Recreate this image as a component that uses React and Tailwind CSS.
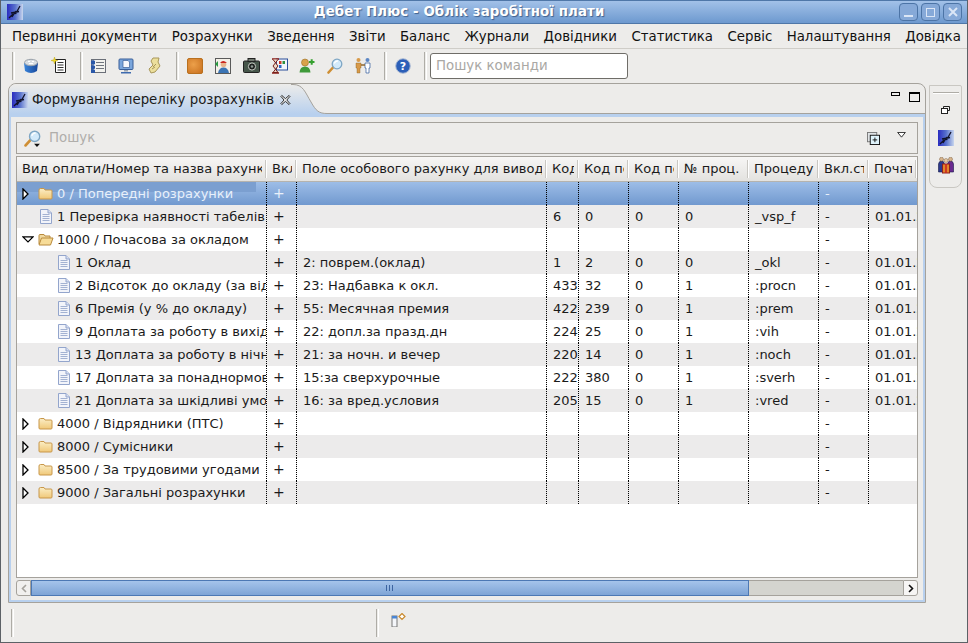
import React from 'react';

const cols = 'grid grid-cols-[250px_30px_250px_32px_50px_50px_70px_70px_50px_48px]';

const menu = ['Первинні документи', 'Розрахунки', 'Зведення', 'Звіти', 'Баланс', 'Журнали', 'Довідники', 'Статистика', 'Сервіс', 'Налаштування', 'Довідка'];
const headers = ['Вид оплати/Номер та назва рахунку', 'Вкл', 'Поле особового рахунку для виводу', 'Код', 'Код пол', 'Код пол', '№ проц.', 'Процедура', 'Вкл.ст', 'Початок'];

// kind: c = closed folder, o = open folder, d = document
const rows = [
  { kind: 'c', indent: 0, name: '0 / Попередні розрахунки', plus: '+', stav: '-', selected: true },
  { kind: 'd', indent: 1, name: '1 Перевірка наявності табелів', plus: '+', a: '6', b: '0', c: '0', n: '0', proc: '_vsp_f', stav: '-', date: '01.01.2009' },
  { kind: 'o', indent: 0, name: '1000 / Почасова за окладом', plus: '+', stav: '-' },
  { kind: 'd', indent: 2, name: '1 Оклад', plus: '+', field: '2: поврем.(оклад)', a: '1', b: '2', c: '0', n: '0', proc: '_okl', stav: '-', date: '01.01.2009' },
  { kind: 'd', indent: 2, name: '2 Відсоток до окладу (за відпрацьований час)', plus: '+', field: '23: Надбавка к окл.', a: '433', b: '32', c: '0', n: '1', proc: ':procn', stav: '-', date: '01.01.2009' },
  { kind: 'd', indent: 2, name: '6 Премія (у % до окладу)', plus: '+', field: '55: Месячная премия', a: '422', b: '239', c: '0', n: '1', proc: ':prem', stav: '-', date: '01.01.2009' },
  { kind: 'd', indent: 2, name: '9 Доплата за роботу в вихідні', plus: '+', field: '22: допл.за празд.дн', a: '224', b: '25', c: '0', n: '1', proc: ':vih', stav: '-', date: '01.01.2009' },
  { kind: 'd', indent: 2, name: '13 Доплата за роботу в нічний час', plus: '+', field: '21: за ночн. и вечер', a: '220', b: '14', c: '0', n: '1', proc: ':noch', stav: '-', date: '01.01.2009' },
  { kind: 'd', indent: 2, name: '17 Доплата за понаднормові', plus: '+', field: '15:за сверхурочные', a: '222', b: '380', c: '0', n: '1', proc: ':sverh', stav: '-', date: '01.01.2009' },
  { kind: 'd', indent: 2, name: '21 Доплата за шкідливі умови', plus: '+', field: '16: за вред.условия', a: '205', b: '15', c: '0', n: '1', proc: ':vred', stav: '-', date: '01.01.2009' },
  { kind: 'c', indent: 0, name: '4000 / Відрядники (ПТС)', plus: '+', stav: '-' },
  { kind: 'c', indent: 0, name: '8000 / Сумісники', plus: '+', stav: '-' },
  { kind: 'c', indent: 0, name: '8500 / За трудовими угодами', plus: '+', stav: '-' },
  { kind: 'c', indent: 0, name: '9000 / Загальні розрахунки', plus: '+', stav: '-' },
];

const AppIcon = ({ size = 16 }) => (
  <svg width={size} height={size} viewBox="0 0 16 16" className="shrink-0">
    <defs>
      <linearGradient id="appg" x1="0" x2="1" y1="0" y2="0">
        <stop offset="0" stopColor="#2a2cc0" />
        <stop offset="0.5" stopColor="#5670cc" />
        <stop offset="1" stopColor="#c8d6ee" />
      </linearGradient>
    </defs>
    <rect width="16" height="16" fill="url(#appg)" />
    <path d="M2 14 L6 10 L5 13 L9 7 L8.5 10 L13 2 M4 9 L12 7.5" stroke="#10122a" strokeWidth="1.3" fill="none" />
  </svg>
);

const FolderClosed = () => (
  <svg width="15" height="13" viewBox="0 0 15 13">
    <defs>
      <linearGradient id="fold" x1="0" x2="0" y1="0" y2="1">
        <stop offset="0" stopColor="#fbeec6" />
        <stop offset="1" stopColor="#f0c878" />
      </linearGradient>
    </defs>
    <path d="M1 3 V11 Q1 12 2 12 H13 Q14 12 14 11 V4 Q14 3 13 3 H7 L6 1.5 H2.5 Q1 1.5 1 3Z" fill="url(#fold)" stroke="#c8974a" />
  </svg>
);

const FolderOpen = () => (
  <svg width="16" height="13" viewBox="0 0 16 13">
    <path d="M1 11 V2.5 Q1 1.5 2 1.5 H6 L7 3 H12 V5" fill="#f0d9a0" stroke="#b98a3c" />
    <path d="M1 12 L3.5 5 H15 L12.5 12 Z" fill="#f7dc98" stroke="#b98a3c" strokeLinejoin="round" />
  </svg>
);

const DocIcon = () => (
  <svg width="12" height="15" viewBox="0 0 12 15">
    <path d="M0.5 0.5 H8 L11.5 4 V14.5 H0.5 Z" fill="#f2f4fa" stroke="#93a5cc" />
    <path d="M8 0.5 V4 H11.5" fill="#d6dff2" stroke="#93a5cc" />
    <path d="M2.5 5.5 H9.5 M2.5 7.5 H9.5 M2.5 9.5 H9.5 M2.5 11.5 H9.5" stroke="#a3b2d2" />
  </svg>
);

const ArrowRight = () => (
  <svg width="7" height="12" viewBox="0 0 7 12">
    <path d="M1 1 L6 6 L1 11 Z" fill="#fff" stroke="#000" strokeWidth="1.3" />
  </svg>
);

const ArrowDown = () => (
  <svg width="12" height="7" viewBox="0 0 12 7">
    <path d="M1 0.8 H11 L6 6 Z" fill="#fff" stroke="#000" strokeWidth="1.2" />
  </svg>
);

const Magnifier = ({ size = 16, dropdown }) => (
  <svg width={size} height={size} viewBox="0 0 16 16">
    <path d="M1.5 14.5 L6 9.5" stroke="#cf8f34" strokeWidth="2.6" strokeLinecap="round" />
    <circle cx="10" cy="6" r="4.8" fill="#d3eafa" stroke="#7ea6c4" strokeWidth="1.3" />
    <path d="M7.3 5.5 Q8 3 11 2.8" stroke="#fff" strokeWidth="1.2" fill="none" />
    {dropdown && <path d="M9.5 13 H15 L12.2 16 Z" fill="#111" />}
  </svg>
);

// toolbar drawings
const TbDatabase = () => (
  <svg width="16" height="16" viewBox="0 0 16 16">
    <defs>
      <linearGradient id="dbg" x1="0" x2="1" y1="0" y2="0">
        <stop offset="0" stopColor="#3b86dc" />
        <stop offset="1" stopColor="#17479a" />
      </linearGradient>
    </defs>
    <path d="M1 5 L2 13 Q8 17 14 13 L15 5 Z" fill="url(#dbg)" />
    <ellipse cx="8" cy="4.5" rx="6.5" ry="3.2" fill="#d8dde2" stroke="#9aa2aa" />
    <path d="M5 3.5 H7 M9 3.5 H11 M6 5.5 H10" stroke="#fff" />
  </svg>
);
const TbNote = () => (
  <svg width="16" height="17" viewBox="0 0 16 17">
    <path d="M4.5 2.5 H14.5 V15.5 H4.5 Z" fill="#fff" stroke="#222" />
    <path d="M6.5 5.5 H12.5 M6.5 8 H12.5 M6.5 10.5 H12.5 M6.5 13 H12.5" stroke="#333" />
    <path d="M3.5 0 L4.3 2.7 L7 3.5 L4.3 4.3 L3.5 7 L2.7 4.3 L0 3.5 L2.7 2.7Z" fill="#f2dc2a" stroke="#b59a10" strokeWidth="0.4" />
  </svg>
);
const TbList = () => (
  <svg width="16" height="15" viewBox="0 0 16 15">
    <rect x="1.5" y="1.5" width="14" height="13" fill="#f2f2ee" stroke="#6b6f78" />
    <path d="M6 4.5 H14 M6 7.5 H14 M6 10.5 H14" stroke="#70757e" />
    <path d="M1 3 L3 2 L5 3 V6 L3 7 L1 6 Z M1 7.5 L3 7 L5 8 V10.5 L3 11.5 L1 10.5 Z M1 11.5 L3 11 L5 12 V15 H1 Z" fill="#2b58a8" />
  </svg>
);
const TbMonitor = () => (
  <svg width="16" height="16" viewBox="0 0 16 16">
    <rect x="1" y="1" width="14" height="10.5" rx="1" fill="#7aa6dc" stroke="#3a5f98" />
    <path d="M5 2.5 H10 L11.5 4 V9.5 H5 Z" fill="#f6f8fc" stroke="#3a5f98" strokeWidth="0.7" />
    <path d="M6 12 H10 V13.5 H6Z" fill="#9aa5b2" />
    <path d="M3 14 H13 V15.5 H3Z" fill="#3e6bae" />
  </svg>
);
const TbScroll = () => (
  <svg width="14" height="17" viewBox="0 0 14 17">
    <path d="M6 1 H12 L11 5 L13 9 L8 15 L4 16 L2 12 L6 8 L4 4 Z" fill="#ecdf9c" stroke="#a8975a" />
    <path d="M6 10 L9 7 M5 12 L8 10" stroke="#a8975a" />
  </svg>
);
const TbOrange = () => (
  <svg width="16" height="16" viewBox="0 0 16 16">
    <defs>
      <radialGradient id="orng" cx="0.4" cy="0.4" r="0.8">
        <stop offset="0" stopColor="#eca04a" />
        <stop offset="1" stopColor="#c9701e" />
      </radialGradient>
    </defs>
    <rect x="0.5" y="0.5" width="15" height="15" rx="1.5" fill="url(#orng)" stroke="#b9701f" />
  </svg>
);
const TbPhoto = () => (
  <svg width="16" height="16" viewBox="0 0 16 16">
    <rect x="0.5" y="0.5" width="15" height="15" fill="#f4f0e8" stroke="#5a5a5a" />
    <circle cx="8.5" cy="6.5" r="2.8" fill="#e8b48c" />
    <path d="M5 5 Q8 1 12 5Z" fill="#c9261f" />
    <path d="M3 15 Q4 9.5 8.5 9.5 Q13 9.5 14 15Z" fill="#3b74b4" />
    <path d="M0 6 L3 3 V9Z" fill="#2a9a42" />
  </svg>
);
const TbCamera = () => (
  <svg width="17" height="15" viewBox="0 0 17 15">
    <rect x="0.5" y="3" width="16" height="11.5" rx="1" fill="#46564a" stroke="#222" />
    <rect x="5" y="0.5" width="7" height="3" fill="#70786f" stroke="#222" />
    <circle cx="9" cy="8.5" r="3.6" fill="#1d211e" stroke="#c7cbc5" />
    <circle cx="9" cy="8.5" r="1.3" fill="#8f9a93" />
  </svg>
);
const TbHourglass = () => (
  <svg width="17" height="16" viewBox="0 0 17 16">
    <rect x="5.5" y="1" width="11" height="11" fill="#f2f5fb" stroke="#2c4f9a" />
    <rect x="8" y="3" width="2.5" height="3" fill="#d23a2a" />
    <rect x="11.5" y="3" width="2.5" height="3" fill="#2f8f3f" />
    <rect x="8" y="7" width="2.5" height="3" fill="#2c66c0" />
    <path d="M1 1 H8 M1 15 H8" stroke="#8a1f1a" strokeWidth="1.6" />
    <path d="M2 1.5 L7 8 L2 14.5 H7 L2 8 L7 1.5" fill="#e8d8c8" stroke="#7a1f1a" />
  </svg>
);
const TbPersonAdd = () => (
  <svg width="16" height="15" viewBox="0 0 16 15">
    <circle cx="6" cy="4.5" r="3.5" fill="#d8a24a" stroke="#9a6f25" strokeWidth="0.6" />
    <path d="M0.5 14.5 Q1 8.5 6 8.5 Q11 8.5 11.5 14.5Z" fill="#3f9a3a" />
    <path d="M10 4 H15.5 M12.7 1.2 V6.8" stroke="#35a02f" strokeWidth="2" />
  </svg>
);
const TbPeople = () => (
  <svg width="16" height="17" viewBox="0 0 16 17">
    <circle cx="3.5" cy="3" r="2" fill="#d89a4a" />
    <path d="M1 6 H6 V11 H5 V16 H2 V11 H1Z" fill="#d89a4a" stroke="#8a5f20" strokeWidth="0.4" />
    <circle cx="12.5" cy="3" r="2" fill="#5b86c4" />
    <path d="M10 6 H15 V11 H14 V16 H11 V11 H10Z" fill="#fff" stroke="#2e5a9c" strokeWidth="0.7" />
    <path d="M6 8 H10" stroke="#8a5f20" strokeWidth="1.4" />
  </svg>
);
const TbHelp = () => (
  <svg width="16" height="16" viewBox="0 0 16 16">
    <circle cx="8" cy="8" r="7.3" fill="#2c5fb8" stroke="#aebcd4" />
    <text x="8" y="12" textAnchor="middle" fontSize="11" fontWeight="700" fill="#fff" fontFamily="'DejaVu Sans',sans-serif">?</text>
  </svg>
);
const GiftIcon = () => (
  <svg width="16" height="17" viewBox="0 0 16 17">
    <path d="M0.5 7 Q1 4 3.5 4 Q6 4 6.5 7 V15 H0.5Z" fill="#2c3a8c" stroke="#161a4a" strokeWidth="0.6" />
    <path d="M9.5 7 Q10 4 12.5 4 Q15 4 15.5 7 V15 H9.5Z" fill="#6a2a90" stroke="#161a4a" strokeWidth="0.6" />
    <rect x="4.5" y="7" width="7" height="9" fill="#e2852a" stroke="#8f1f1f" />
    <path d="M8 7 V16" stroke="#c9261f" strokeWidth="1.6" />
    <circle cx="3.5" cy="2.2" r="2" fill="#d6b48c" stroke="#6a4a2a" strokeWidth="0.4" />
    <circle cx="12.5" cy="2.2" r="2" fill="#d6b48c" stroke="#6a4a2a" strokeWidth="0.4" />
    <circle cx="8" cy="3.5" r="2" fill="#e3c8a4" stroke="#6a4a2a" strokeWidth="0.4" />
  </svg>
);

const ToolSep = ({ className = '' }) => (
  <div className={`h-[28px] w-[3px] shrink-0 border-l border-[#aeaca6] border-r border-r-white ${className}`} />
);

const ToolBtn = ({ children }) => (
  <div className="flex h-[28px] w-[28px] shrink-0 items-center justify-center">{children}</div>
);

const Cell = ({ children, className = '', last }) => (
  <div className={`flex min-w-0 items-center overflow-hidden whitespace-nowrap pl-[6px] ${last ? '' : 'border-r border-dotted border-black'} ${className}`}>
    {children}
  </div>
);

const TreeCell = ({ row }) => {
  const left = row.indent === 0 ? 'pl-[5px]' : row.indent === 1 ? 'pl-[21px]' : 'pl-[39px]';
  return (
    <div className={`relative flex min-w-0 items-center overflow-hidden whitespace-nowrap border-r border-dotted border-black ${left}`}>
      {row.selected && <div className="absolute left-0 top-0 h-[10px] w-[239px] bg-[#7b9fd0]" />}
      {row.indent === 0 && (
        <span className="relative flex w-[15px] shrink-0 items-center">
          {row.kind === 'o' ? <ArrowDown /> : <ArrowRight />}
        </span>
      )}
      {row.indent === 0 ? (
        <span className="relative flex w-[20px] shrink-0 items-center pl-[1px]">
          {row.kind === 'c' ? <FolderClosed /> : <FolderOpen />}
        </span>
      ) : (
        <span className="relative flex w-[19px] shrink-0 items-center pl-[2px]">
          <DocIcon />
        </span>
      )}
      <span className="relative">{row.name}</span>
    </div>
  );
};

const TableRow = ({ row, index }) => {
  const bg = row.selected
    ? 'bg-gradient-to-b from-[#9dbde7] to-[#7199cf] text-[#e8f0fa]'
    : index % 2 === 1
      ? 'bg-[#ecebeb]'
      : 'bg-white';
  return (
    <div className={`${cols} h-[23px] ${bg}`}>
      <TreeCell row={row} />
      <Cell className="text-[14px]">{row.plus}</Cell>
      <Cell>{row.field}</Cell>
      <Cell>{row.a}</Cell>
      <Cell>{row.b}</Cell>
      <Cell>{row.c}</Cell>
      <Cell>{row.n}</Cell>
      <Cell>{row.proc}</Cell>
      <Cell>{row.stav}</Cell>
      <Cell last>{row.date}</Cell>
    </div>
  );
};

export default function App() {
  return (
    <div className="flex h-[643px] w-[968px] flex-col overflow-hidden border-x border-b border-[#5c6166] bg-[#edecea] font-['DejaVu_Sans',sans-serif] text-[13.33px] text-[#1a1a1a]">
      {/* Title bar */}
      <div className="relative flex h-[24px] shrink-0 items-center justify-center border-y border-y-[#4f77a8] bg-gradient-to-b from-[#a2c1e8] to-[#6d99cf]">
        <div className="absolute left-[6px] top-[3px]">
          <AppIcon />
        </div>
        <span className="ml-[-50px] font-bold tracking-[0.12px] text-white [text-shadow:1px_1px_1px_#40608c]">Дебет Плюс - Облік заробітної плати</span>
        <div className="absolute right-[5px] top-[2px] flex gap-[3px]">
          <div className="flex h-[18px] w-[19px] items-end justify-center rounded-[4px] border border-[#4c74a6] bg-[#86a9d8] pb-[3px]">
            <div className="h-[2px] w-[9px] bg-[#dbe6f6]" />
          </div>
          <div className="flex h-[18px] w-[19px] items-center justify-center rounded-[4px] border border-[#4c74a6] bg-[#86a9d8]">
            <div className="h-[9px] w-[9px] border border-[#dbe6f6]" />
          </div>
          <div className="flex h-[18px] w-[19px] items-center justify-center rounded-[4px] border border-[#4c74a6] bg-[#86a9d8]">
            <svg width="10" height="10" viewBox="0 0 10 10"><path d="M1 1 L9 9 M9 1 L1 9" stroke="#dbe6f6" strokeWidth="2" /></svg>
          </div>
        </div>
      </div>

      {/* Menu bar */}
      <div className="flex h-[25px] shrink-0 items-center gap-[14.4px] border-b border-[#cfcdc8] pl-[11px] pt-[1px] whitespace-nowrap text-[#111]">
        {menu.map((m) => (
          <span key={m}>{m}</span>
        ))}
      </div>

      {/* Toolbar */}
      <div className="flex h-[34px] shrink-0 items-center pb-[1px] pl-[11px]">
        <ToolSep className="mr-[2px]" />
        <ToolBtn><TbDatabase /></ToolBtn>
        <ToolBtn><TbNote /></ToolBtn>
        <ToolSep className="ml-[7px] mr-[1px]" />
        <ToolBtn><TbList /></ToolBtn>
        <ToolBtn><TbMonitor /></ToolBtn>
        <ToolBtn><TbScroll /></ToolBtn>
        <ToolSep className="ml-[8px] mr-[2px]" />
        <ToolBtn><TbOrange /></ToolBtn>
        <ToolBtn><TbPhoto /></ToolBtn>
        <ToolBtn><TbCamera /></ToolBtn>
        <ToolBtn><TbHourglass /></ToolBtn>
        <ToolBtn><TbPersonAdd /></ToolBtn>
        <ToolBtn><Magnifier /></ToolBtn>
        <ToolBtn><TbPeople /></ToolBtn>
        <ToolSep className="ml-[7px] mr-[2px]" />
        <ToolBtn><TbHelp /></ToolBtn>
        <ToolSep className="ml-[7px] mr-[3px]" />
        <div className="flex h-[26px] w-[198px] items-center rounded-[3px] border border-[#6f6d68] bg-white pl-[5px] text-[#aaa8a4]">Пошук команди</div>
      </div>

      {/* Workbench */}
      <div className="flex min-h-0 flex-1 pl-[7px] pr-[5px]">
        <div className="flex h-[520px] w-[918px] flex-col rounded-t-[8px] border border-[#a5a29c] bg-[#edecea]">
          {/* Tab header */}
          <div className="flex h-[30px] shrink-0">
            <div className="flex w-[282px] items-center gap-[4px] rounded-tl-[8px] bg-gradient-to-b from-[#edecea] to-[#b8d0ee] pl-[3px] pt-[1px]">
              <AppIcon />
              <span className="whitespace-nowrap">Формування переліку розрахунків</span>
              <svg width="12" height="12" viewBox="0 0 12 12" className="ml-[2px]">
                <path d="M2 1 L6 4.5 L10 1 L11 2 L7.5 6 L11 10 L10 11 L6 7.5 L2 11 L1 10 L4.5 6 L1 2 Z" fill="#fff" stroke="#111" />
              </svg>
            </div>
            <svg width="36" height="30" viewBox="0 0 36 30" className="shrink-0">
              <defs>
                <linearGradient id="tabg" x1="0" x2="0" y1="0" y2="1">
                  <stop offset="0" stopColor="#edecea" />
                  <stop offset="1" stopColor="#b8d0ee" />
                </linearGradient>
              </defs>
              <path d="M0 0 H2 C12 0 14 8 20 18 C25 27 28 29.5 36 29.5 V30 H0 Z" fill="url(#tabg)" />
              <path d="M0 0.5 H2 C12 0.5 14 8 20 18 C25 27 28 29.5 36 29.5" fill="none" stroke="#a5a29c" />
            </svg>
            <div className="flex flex-1 justify-end gap-[9px] border-b border-[#a5a29c] pr-[5px] pt-[8px]">
              <div className="h-[4px] w-[9px] border border-black" />
              <div className="h-[10px] w-[11px] border border-black border-t-2" />
            </div>
          </div>

          {/* Blue frame */}
          <div className="h-[3px] shrink-0 bg-[#b8d0ee]" />
          <div className="flex min-h-0 flex-1 flex-col border-x-2 border-b-2 border-[#b8d0ee] px-[5px] pt-[5px]">
            {/* Search bar */}
            <div className="flex h-[32px] shrink-0 items-center border border-[#a5a29c] pl-[7px] pr-[11px]">
              <Magnifier size={17} dropdown />
              <span className="ml-[8px] text-[#b0aeaa]">Пошук</span>
              <div className="ml-auto mt-[9px] flex items-start gap-[17px] self-start">
                <svg width="13" height="13" viewBox="0 0 14 14">
                  <rect x="0.5" y="0.5" width="10" height="10" fill="#dfe3e6" stroke="#777" />
                  <rect x="3.5" y="3.5" width="10" height="10" fill="#dff3fb" stroke="#111" />
                  <path d="M6 8.5 H11 M8.5 6 V11" stroke="#111" />
                </svg>
                <svg width="9" height="6" viewBox="0 0 10 7">
                  <path d="M0.5 0.5 H9.5 L5 6 Z" fill="#fff" stroke="#111" />
                </svg>
              </div>
            </div>

            {/* Table */}
            <div className="mt-[2px] flex h-[422px] shrink-0 flex-col overflow-hidden border border-[#a5a29c] bg-white text-[13px]">
              <div className={`${cols} h-[25px] shrink-0 border-b border-[#b5b3ae] bg-gradient-to-b from-[#f7f6f5] to-[#e3e2df]`}>
                {headers.map((h, i) => (
                  <div key={i} className="flex min-w-0 items-center pl-[5px]">
                    <span className="min-w-0 flex-1 overflow-hidden whitespace-nowrap">{h}</span>
                    <div className="ml-[3px] h-[18px] w-[2px] shrink-0 border-l border-[#c9c7c2] border-r border-r-white" />
                  </div>
                ))}
              </div>
              {rows.map((r, i) => (
                <TableRow key={r.name} row={r} index={i} />
              ))}
            </div>

            {/* Horizontal scrollbar */}
            <div className="mt-[2px] flex h-[16px] shrink-0">
              <div className="flex w-[15px] items-center justify-center rounded-l-[3px] border border-[#a5a29c] bg-[#f1f0ee]">
                <svg width="6" height="9" viewBox="0 0 6 9"><path d="M5 1 L1.5 4.5 L5 8" fill="none" stroke="#a5a29c" strokeWidth="1.6" /></svg>
              </div>
              <div className="flex w-[718px] items-center justify-center border border-[#4c78b4] bg-gradient-to-b from-[#a5c4eb] to-[#7ea4d6]">
                <svg width="8" height="6" viewBox="0 0 8 6"><path d="M0.5 0 V6 M3.5 0 V6 M6.5 0 V6" stroke="#3c64a0" /></svg>
              </div>
              <div className="flex-1 border-y border-[#a5a29c] bg-[#d4d4cf]" />
              <div className="flex w-[15px] items-center justify-center rounded-r-[3px] border border-[#a5a29c] bg-[#f6f5f4]">
                <svg width="6" height="9" viewBox="0 0 6 9"><path d="M1 1 L4.5 4.5 L1 8" fill="none" stroke="#111" strokeWidth="1.6" /></svg>
              </div>
            </div>
          </div>
        </div>

        {/* Right trim */}
        <div className="ml-[3px] mt-[2px] flex h-[103px] w-[33px] shrink-0 flex-col items-center rounded-b-[8px] rounded-tr-[2px] border border-[#c9c7c2]">
          <div className="mt-[6px] h-[2px] w-[26px] border-t border-[#aeaca6] border-b border-b-white" />
          <svg width="9" height="8" viewBox="0 0 9 8" className="mt-[12px]">
            <path d="M2.5 2.5 V0.5 H8.5 V4.5 H6.5" fill="none" stroke="#222" />
            <rect x="0.5" y="2.5" width="6" height="5" fill="#fff" stroke="#222" />
          </svg>
          <div className="mt-[16px]"><AppIcon /></div>
          <div className="mt-[11px]"><GiftIcon /></div>
        </div>
      </div>

      {/* Status bar */}
      <div className="flex h-[39px] shrink-0 items-center pl-[10px]">
        <ToolSep />
        <ToolSep className="ml-[362px]" />
        <svg width="15" height="14" viewBox="0 0 15 14" className="ml-[12px] mt-[-5px]">
          <rect x="1" y="3" width="5" height="11" fill="#f4f6fa" stroke="#777" />
          <rect x="1" y="3" width="5" height="2.5" fill="#4a86d4" />
          <path d="M11 0.5 L14 3.5 L11 6.5 L8 3.5 Z" fill="#fff" stroke="#c98a2e" strokeWidth="1.2" />
        </svg>
      </div>
    </div>
  );
}
